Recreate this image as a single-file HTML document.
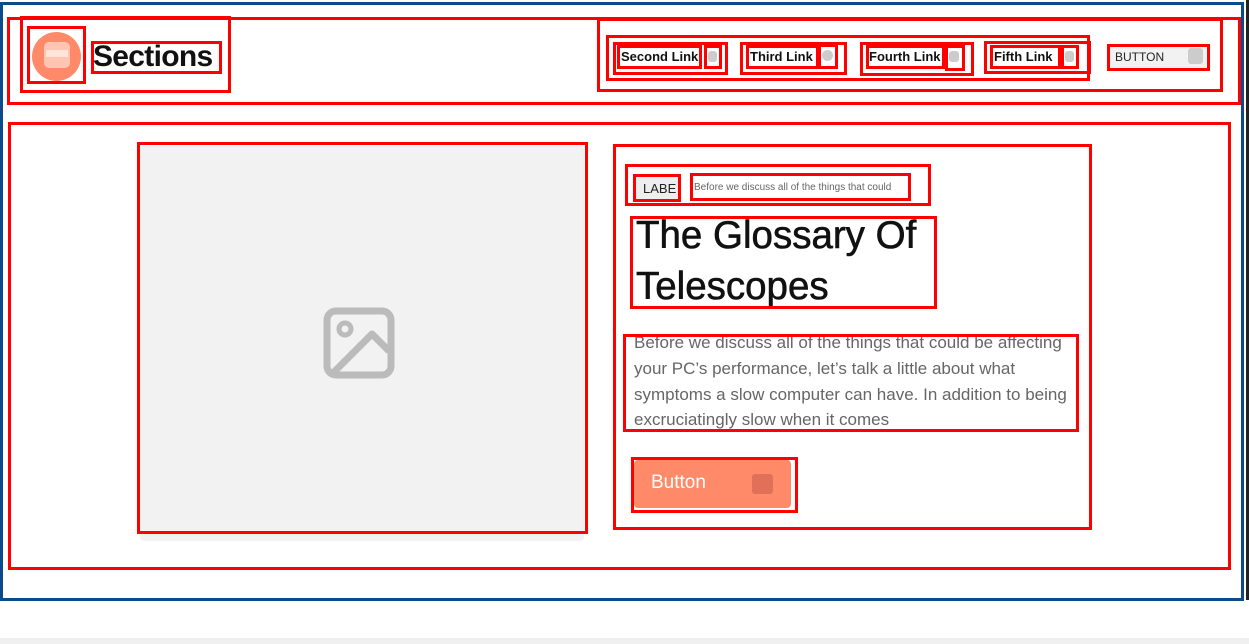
<!DOCTYPE html>
<html><head><meta charset="utf-8"><style>
*{box-sizing:border-box;margin:0;padding:0}
body{width:1249px;height:644px;background:#fff;position:relative;overflow:hidden;font-family:"Liberation Sans",sans-serif}
.a{position:absolute}
.r{position:absolute;border:3px solid #f00}
.t{position:absolute;white-space:nowrap}
.ic{position:absolute;background:#ccc;border-radius:3px}
</style></head><body>
<div class="a" style="left:0;top:638px;width:1249px;height:6px;background:#f0f0f0"></div>
<div class="a" style="left:0;top:2px;width:1244px;height:599px;border:3px solid #0b4a8b"></div>
<div class="a" style="left:1246px;top:0;width:3px;height:600px;background:#222"></div>

<!-- header -->
<div class="r" style="left:7px;top:17px;width:1234px;height:88px"></div>
<div class="r" style="left:20px;top:16px;width:211px;height:77px"></div>
<div class="a" style="left:32px;top:32px;width:49px;height:49px;border-radius:50%;background:#ff8a6a"></div>
<div class="a" style="left:44px;top:42px;width:26px;height:26px;border-radius:5px;background:#ffc4b2"></div>
<div class="a" style="left:46px;top:50px;width:22px;height:7px;background:#ffe4da"></div>
<div class="r" style="left:27px;top:26px;width:59px;height:58px"></div>
<div class="t" style="left:93px;top:40px;font-size:30px;font-weight:bold;color:#111;letter-spacing:-0.7px">Sections</div>
<div class="r" style="left:91px;top:41px;width:131px;height:33px"></div>

<div class="r" style="left:597px;top:18px;width:626px;height:74px"></div>
<div class="r" style="left:606px;top:35px;width:484px;height:46px"></div>

<div class="r" style="left:613px;top:42px;width:115px;height:33px"></div>
<div class="t" style="left:621px;top:49px;font-size:13px;font-weight:bold;color:#111">Second Link</div>
<div class="r" style="left:617px;top:45px;width:85px;height:24px"></div>
<div class="ic" style="left:708px;top:51px;width:9px;height:11px"></div>
<div class="r" style="left:704px;top:45px;width:18px;height:24px"></div>

<div class="r" style="left:740px;top:42px;width:107px;height:33px"></div>
<div class="t" style="left:750px;top:49px;font-size:13px;font-weight:bold;color:#111">Third Link</div>
<div class="r" style="left:746px;top:45px;width:73px;height:24px"></div>
<div class="ic" style="left:822px;top:50px;width:11px;height:11px;border-radius:50%"></div>
<div class="r" style="left:818px;top:44px;width:20px;height:25px"></div>

<div class="r" style="left:860px;top:42px;width:114px;height:34px"></div>
<div class="t" style="left:869px;top:49px;font-size:13px;font-weight:bold;color:#111">Fourth Link</div>
<div class="r" style="left:866px;top:45px;width:79px;height:24px"></div>
<div class="ic" style="left:949px;top:51px;width:10px;height:11px"></div>
<div class="r" style="left:945px;top:45px;width:20px;height:26px"></div>

<div class="r" style="left:984px;top:41px;width:107px;height:33px"></div>
<div class="t" style="left:994px;top:49px;font-size:13px;font-weight:bold;color:#111">Fifth Link</div>
<div class="r" style="left:990px;top:45px;width:71px;height:24px"></div>
<div class="ic" style="left:1065px;top:51px;width:9px;height:11px"></div>
<div class="r" style="left:1061px;top:45px;width:18px;height:24px"></div>

<div class="a" style="left:1110px;top:47px;width:96px;height:21px;background:#f2f2f2"></div>
<div class="t" style="left:1115px;top:50px;font-size:12px;color:#222">BUTTON</div>
<div class="ic" style="left:1188px;top:48px;width:15px;height:16px"></div>
<div class="r" style="left:1107px;top:44px;width:103px;height:27px"></div>

<!-- main -->
<div class="r" style="left:8px;top:122px;width:1223px;height:448px"></div>
<div class="a" style="left:140px;top:146px;width:444px;height:395px;background:#f2f2f2;border-radius:4px"></div>
<svg class="a" style="left:323px;top:307px" width="72" height="72" viewBox="0 0 72 72">
<rect x="4" y="4" width="64" height="64" rx="9" fill="none" stroke="#bbb" stroke-width="7"/>
<circle cx="22" cy="22" r="6" fill="none" stroke="#bbb" stroke-width="5"/>
<path d="M10 66 L49 27 L66 44" fill="none" stroke="#bbb" stroke-width="7" stroke-linejoin="round"/>
</svg>
<div class="r" style="left:137px;top:142px;width:451px;height:392px"></div>

<div class="r" style="left:613px;top:144px;width:479px;height:386px"></div>
<div class="r" style="left:625px;top:164px;width:306px;height:42px"></div>
<div class="a" style="left:636px;top:177px;width:42px;height:22px;background:#eee"></div>
<div class="t" style="left:643px;top:181px;font-size:13px;color:#222">LABE</div>
<div class="r" style="left:633px;top:174px;width:48px;height:28px"></div>
<div class="t" style="left:694px;top:182px;font-size:10px;color:#666">Before we discuss all of the things that could</div>
<div class="r" style="left:690px;top:173px;width:221px;height:28px"></div>

<div class="a" style="left:636px;top:210px;font-size:38.5px;line-height:51px;color:#111;width:300px;-webkit-text-stroke:0.6px #111">The Glossary Of<br>Telescopes</div>
<div class="r" style="left:630px;top:216px;width:307px;height:93px"></div>

<div class="a" style="left:634px;top:330px;font-size:17px;line-height:25.8px;color:#666;width:445px">Before we discuss all of the things that could be affecting your PC’s performance, let’s talk a little about what symptoms a slow computer can have. In addition to being excruciatingly slow when it comes</div>
<div class="r" style="left:623px;top:334px;width:456px;height:98px"></div>

<div class="a" style="left:634px;top:460px;width:157px;height:48px;background:#ff8a6a;border-radius:4px"></div>
<div class="t" style="left:651px;top:472px;font-size:19px;color:#fff">Button</div>
<div class="a" style="left:752px;top:474px;width:21px;height:20px;background:#e07058;border-radius:3px"></div>
<div class="r" style="left:631px;top:457px;width:167px;height:56px"></div>
</body></html>
